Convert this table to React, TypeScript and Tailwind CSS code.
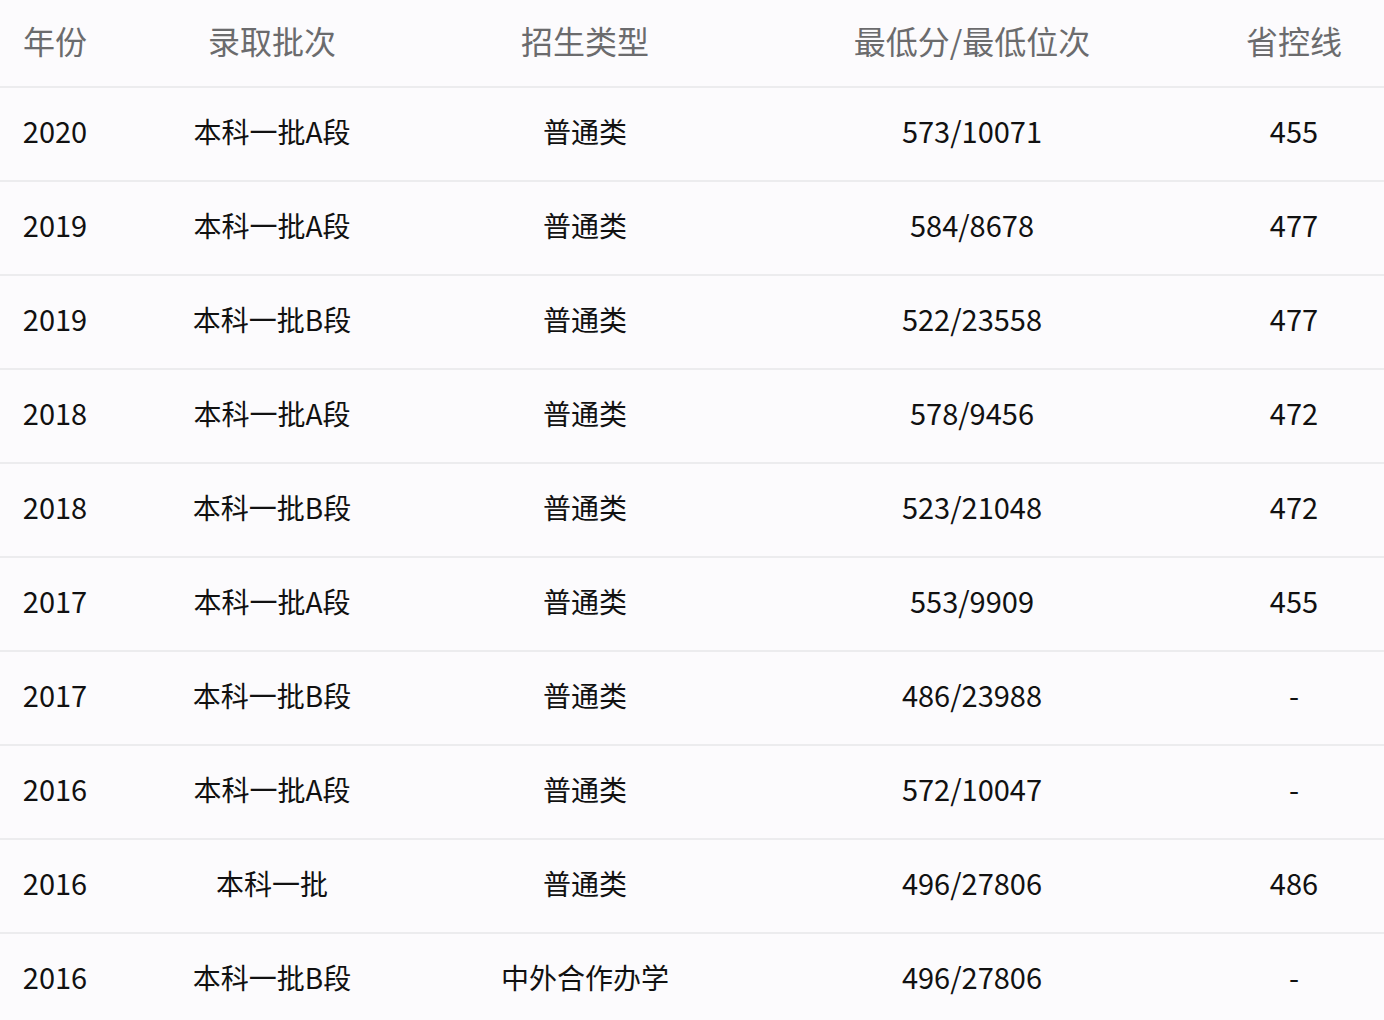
const rows: [string, string, string, string, string][] = [
  ["2020", "本科一批A段", "普通类", "573/10071", "455"],
  ["2019", "本科一批A段", "普通类", "584/8678", "477"],
  ["2019", "本科一批B段", "普通类", "522/23558", "477"],
  ["2018", "本科一批A段", "普通类", "578/9456", "472"],
  ["2018", "本科一批B段", "普通类", "523/21048", "472"],
  ["2017", "本科一批A段", "普通类", "553/9909", "455"],
  ["2017", "本科一批B段", "普通类", "486/23988", "-"],
  ["2016", "本科一批A段", "普通类", "572/10047", "-"],
  ["2016", "本科一批", "普通类", "496/27806", "486"],
  ["2016", "本科一批B段", "中外合作办学", "496/27806", "-"],
];

const headers = ["年份", "录取批次", "招生类型", "最低分/最低位次", "省控线"];

const grid = "grid grid-cols-[110px_324px_302px_472px_1fr] items-center";

// numeric columns read a touch wider than the CJK ones
const cellSize = ["text-[29px]", "text-[28px]", "text-[28px]", "text-[29px]", "text-[29px] pr-1"];

export default function App() {
  return (
    <div
      className="h-[1020px] w-[1384px] overflow-hidden bg-[#fcfbfd]"
      style={{ fontFamily: '"Noto Sans CJK SC", "Noto Sans", sans-serif' }}
    >
      <div className={`${grid} h-[88px] border-b-2 border-[#ececee] pb-[6px] text-[32px] text-[#6b6b6d]`}>
        {headers.map((h, j) => (
          <div key={h} className={j === 4 ? "pr-1 text-center" : "text-center"}>
            {h}
          </div>
        ))}
      </div>
      {rows.map((r, i) => (
        <div key={i} className={`${grid} h-[94px] border-b-2 border-[#ececee] pb-[6px] text-[#111]`}>
          {r.map((c, j) => (
            <div key={j} className={`text-center ${cellSize[j]}`}>
              {c}
            </div>
          ))}
        </div>
      ))}
    </div>
  );
}
